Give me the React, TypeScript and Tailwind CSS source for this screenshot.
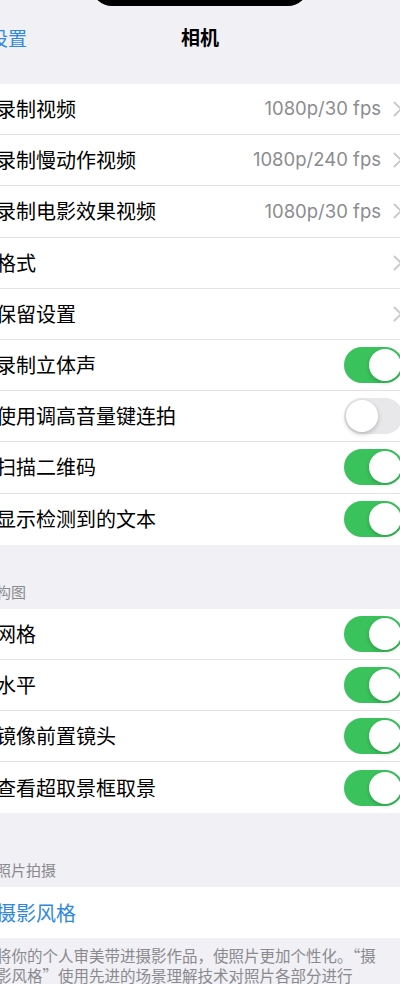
import { ReactNode } from 'react'

const cjk = '"Noto Sans CJK SC", "Noto Sans", sans-serif'
const num = 'Inter, "Noto Sans CJK SC", sans-serif'

type Row =
  | { label: string; kind: 'value'; value?: string }
  | { label: string; kind: 'toggle'; on: boolean }

const mainRows: Row[] = [
  { label: '录制视频', kind: 'value', value: '1080p/30 fps' },
  { label: '录制慢动作视频', kind: 'value', value: '1080p/240 fps' },
  { label: '录制电影效果视频', kind: 'value', value: '1080p/30 fps' },
  { label: '格式', kind: 'value' },
  { label: '保留设置', kind: 'value' },
  { label: '录制立体声', kind: 'toggle', on: true },
  { label: '使用调高音量键连拍', kind: 'toggle', on: false },
  { label: '扫描二维码', kind: 'toggle', on: true },
  { label: '显示检测到的文本', kind: 'toggle', on: true },
]

const compositionRows: Row[] = [
  { label: '网格', kind: 'toggle', on: true },
  { label: '水平', kind: 'toggle', on: true },
  { label: '镜像前置镜头', kind: 'toggle', on: true },
  { label: '查看超取景框取景', kind: 'toggle', on: true },
]

function Chevron() {
  return (
    <svg width="10" height="16" viewBox="0 0 10 16" className="shrink-0">
      <path d="M1.5 1.5 L8 8 L1.5 14.5" fill="none" stroke="#c7c7cc" strokeWidth="1.8" strokeLinecap="round" strokeLinejoin="round" />
    </svg>
  )
}

function Toggle({ on }: { on: boolean }) {
  return (
    <div
      className={
        on
          ? 'relative h-[36px] w-[59px] shrink-0 rounded-full bg-[#3ac25c]'
          : 'relative h-[36px] w-[59px] shrink-0 rounded-full bg-[#e8e8ea]'
      }
    >
      <div
        className={
          on
            ? 'absolute top-[2px] right-[2px] h-[32px] w-[32px] rounded-full bg-white shadow-[0_2px_4px_rgba(0,0,0,0.18)]'
            : 'absolute top-[2px] left-[2px] h-[32px] w-[32px] rounded-full bg-white shadow-[0_2px_5px_rgba(0,0,0,0.22)]'
        }
      />
    </div>
  )
}

function Group({ rows }: { rows: Row[] }) {
  return (
    <div className="bg-white">
      {rows.map((row, i) => (
        <div
          key={row.label}
          className={
            i < rows.length - 1
              ? 'flex h-[51.2px] items-center justify-between border-b border-[#e2e2e6] pl-[16px] pr-[17px]'
              : 'flex h-[51.2px] items-center justify-between pl-[16px] pr-[17px]'
          }
        >
          <span className="text-[20px] text-black" style={{ fontFamily: cjk }}>
            {row.label}
          </span>
          {row.kind === 'value' ? (
            <div className="flex items-center gap-[12px]">
              {row.value && (
                <span className="text-[18.5px] text-[#8c8c90]" style={{ fontFamily: num }}>
                  {row.value}
                </span>
              )}
              <Chevron />
            </div>
          ) : (
            <Toggle on={row.on} />
          )}
        </div>
      ))}
    </div>
  )
}

function SectionHeader({ children, height }: { children: ReactNode; height: string }) {
  return (
    <div className={`flex items-end pb-[8px] pl-[16px] ${height}`}>
      <span className="text-[15px] leading-[18px] text-[#8a8a8e]" style={{ fontFamily: cjk }}>
        {children}
      </span>
    </div>
  )
}

export default function App() {
  return (
    <div className="h-[984px] w-[400px] overflow-hidden bg-[#f0f0f5]">
      <div className="-ml-[20px] w-[440px]">
        {/* Notch */}
        <div className="h-[6px] overflow-hidden">
          <div className="mx-auto -mt-[34px] h-[40px] w-[216px] rounded-[20px] bg-black" />
        </div>

        {/* Nav bar */}
        <div className="relative flex h-[64px] items-center justify-center">
          <span className="absolute left-[9px] text-[19px] text-[#2f88de]" style={{ fontFamily: cjk }}>
            设置
          </span>
          <span className="-mt-[2px] text-[19px] font-semibold text-black" style={{ fontFamily: cjk }}>
            相机
          </span>
        </div>
        <div className="h-[14px]" />

        <Group rows={mainRows} />

        <SectionHeader height="h-[64px]">构图</SectionHeader>
        <Group rows={compositionRows} />

        <SectionHeader height="h-[74px]">照片拍摄</SectionHeader>
        <div className="flex h-[51px] items-center bg-white pl-[16px]">
          <span className="text-[20px] text-[#2f88de]" style={{ fontFamily: cjk }}>
            摄影风格
          </span>
        </div>

        <div className="pt-[7px] pl-[16px] text-[15.5px] leading-[20px] text-[#8a8a8e]" style={{ fontFamily: cjk }}>
          <p className="whitespace-nowrap">将你的个人审美带进摄影作品，使照片更加个性化。“摄</p>
          <p className="whitespace-nowrap">影风格”使用先进的场景理解技术对照片各部分进行</p>
        </div>
      </div>
    </div>
  )
}
